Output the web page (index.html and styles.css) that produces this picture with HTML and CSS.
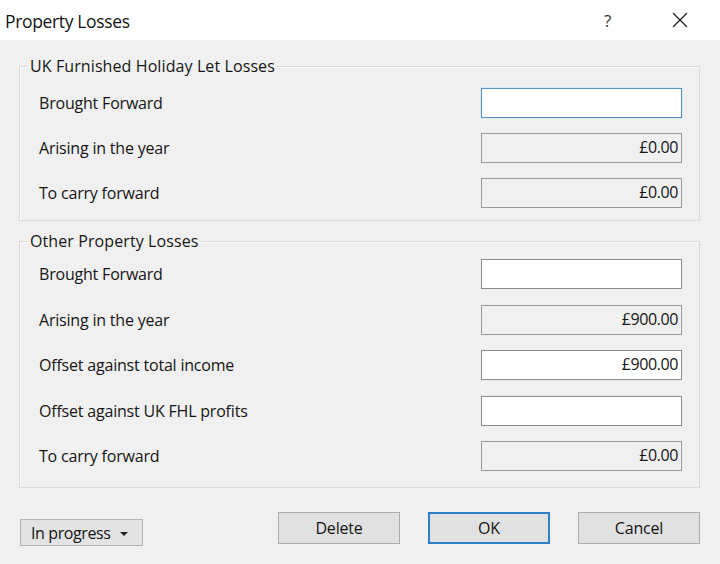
FILE: index.html
```html
<!DOCTYPE html>
<html>
<head>
<meta charset="utf-8">
<link rel="stylesheet" href="styles.css">
</head>
<body>
<div class="dialog">
  <div class="titlebar">
    <span class="title">Property Losses</span>
    <span class="help">?</span>
    <span class="close">
      <svg width="16" height="16" viewBox="0 0 16 16"><path d="M1 1 L15 15 M15 1 L1 15" stroke="#222" stroke-width="1.3" fill="none"/></svg>
    </span>
  </div>
  <div class="content">
    <fieldset class="group g1">
      <legend>UK Furnished Holiday Let Losses</legend>
      <div class="row"><span class="label">Brought Forward</span><div class="field edit focus"></div></div>
      <div class="row"><span class="label">Arising in the year</span><div class="field ro">£0.00</div></div>
      <div class="row"><span class="label">To carry forward</span><div class="field ro">£0.00</div></div>
    </fieldset>
    <fieldset class="group g2">
      <legend>Other Property Losses</legend>
      <div class="row"><span class="label">Brought Forward</span><div class="field edit"></div></div>
      <div class="row"><span class="label">Arising in the year</span><div class="field ro">£900.00</div></div>
      <div class="row"><span class="label">Offset against total income</span><div class="field edit">£900.00</div></div>
      <div class="row"><span class="label">Offset against UK FHL profits</span><div class="field edit"></div></div>
      <div class="row"><span class="label">To carry forward</span><div class="field ro">£0.00</div></div>
    </fieldset>
    <div class="footer">
      <div class="status">In progress <span class="caret"></span></div>
      <div class="buttons">
        <div class="btn">Delete</div>
        <div class="btn default">OK</div>
        <div class="btn">Cancel</div>
      </div>
    </div>
  </div>
</div>
</body>
</html>
```
FILE: styles.css
```css
html, body {
  margin: 0;
  padding: 0;
  background: #f0f0f0;
}
body {
  font-family: "Open Sans", "Noto Sans", sans-serif;
  color: #151515;
  font-size: 16px;
}
.dialog {
  width: 720px;
  height: 564px;
  display: flex;
  flex-direction: column;
  overflow: hidden;
}
.titlebar {
  height: 40px;
  background: #fff;
  display: flex;
  align-items: center;
  padding-left: 5px;
  box-sizing: border-box;
}
.title {
  font-size: 17.5px;
  letter-spacing: -0.35px;
  flex: 1;
  margin-top: 1px;
}
.help {
  font-size: 17px;
  width: 20px;
  margin-right: 48px;
  color: #333;
}
.close {
  width: 16px;
  height: 16px;
  margin-right: 32px;
  display: flex;
}
.content {
  flex: 1;
  background: #f0f0f0;
  padding: 16px 20px 0 19px;
  display: flex;
  flex-direction: column;
}
.group {
  margin: 0;
  border: 1px solid #dadada;
  box-shadow: inset 1px 1px 0 #fafafa;
  padding: 12px 17px 12px 19px;
  display: flex;
  flex-direction: column;
  gap: 15px;
}
.g2 {
  margin-top: 10px;
  padding-top: 8px;
  padding-bottom: 16px;
  gap: 15.5px;
}
legend {
  padding: 0 2px;
  margin-left: -11px;
  line-height: 20px;
  letter-spacing: 0.1px;
}
.row {
  display: flex;
  align-items: center;
  justify-content: space-between;
  height: 30px;
}
.label {
  letter-spacing: -0.2px;
}
.field {
  width: 201px;
  height: 30px;
  box-sizing: border-box;
  border: 1px solid #8a8a8a;
  text-align: right;
  padding-right: 3px;
  line-height: 27px;
  letter-spacing: -0.4px;
}
.field.edit {
  background: #fff;
  border-color: #8c8c8c;
}
.field.ro {
  background: #f0f0f0;
  border-color: #9a9a9a;
}
.field.focus {
  border-color: #5a8ec6;
  box-shadow: 0 0 0 1px #d8ebf8;
}
.footer {
  flex: 1;
  display: flex;
  align-items: flex-start;
  justify-content: space-between;
  padding-top: 24px;
}
.status {
  width: 123px;
  height: 27px;
  box-sizing: border-box;
  margin-top: 7px;
  margin-left: 1px;
  background: #e3e3e3;
  border: 1px solid #b5b5b5;
  display: flex;
  align-items: center;
  padding-left: 10px;
  letter-spacing: -0.4px;
}
.caret {
  width: 0;
  height: 0;
  border-left: 4.5px solid transparent;
  border-right: 4.5px solid transparent;
  border-top: 4.5px solid #222;
  margin-left: 10px;
  margin-top: 2px;
}
.buttons {
  display: flex;
  gap: 28px;
}
.btn {
  width: 122px;
  height: 32px;
  box-sizing: border-box;
  background: #e1e1e1;
  border: 1px solid #adadad;
  display: flex;
  align-items: center;
  justify-content: center;
  letter-spacing: -0.2px;
}
.btn.default {
  border: 2px solid #2f7fc8;
}
```
